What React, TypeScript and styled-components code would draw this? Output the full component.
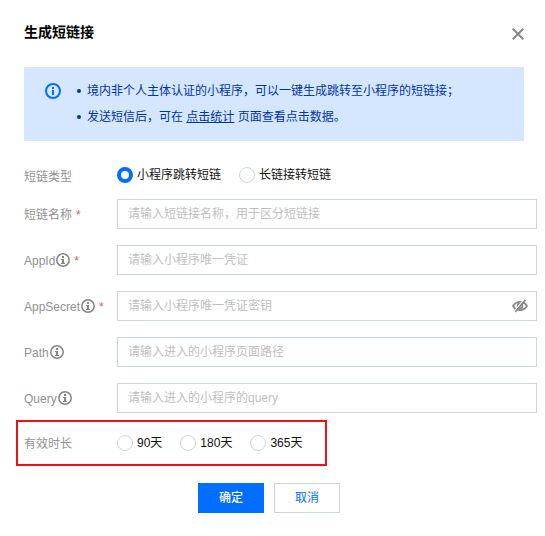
import React from 'react';
import styled, { createGlobalStyle, css } from 'styled-components';

const GlobalStyle = createGlobalStyle`
  *, *::before, *::after { box-sizing: border-box; }
  body {
    margin: 0;
    background: #fff;
    font: 12px/18px "Liberation Sans", "Noto Sans CJK SC", sans-serif;
  }
`;

const Dialog = styled.main`
  width: 545px;
  height: 536px;
  overflow: hidden;
  background: #fff;
`;

const Header = styled.header`
  display: flex;
  align-items: center;
  justify-content: space-between;
  height: 67px;
  padding: 0 21px 0 24px;
`;

const Title = styled.h1`
  margin: 0;
  padding-bottom: 4px;
  font-size: 14px;
  font-weight: 600;
  line-height: 22px;
  color: #000;
`;

const CloseButton = styled.button`
  display: flex;
  padding: 0;
  border: 0;
  background: none;
`;

const Notice = styled.section`
  display: flex;
  width: 500px;
  height: 74px;
  margin-left: 24px;
  padding: 11px 21px;
  background: #d5e7ff;
  color: #0034a8;
`;

const NoticeIcon = styled.span`
  display: flex;
  padding-top: 5px;
  color: #006eff;
`;

const NoticeList = styled.ul`
  margin: 0 0 0 16px;
  padding: 0;
  list-style: none;
`;

const NoticeItem = styled.li`
  display: flex;
  align-items: center;
  height: 26px;
  white-space: pre;

  &::before {
    content: '';
    width: 4px;
    height: 4px;
    margin-right: 6px;
    border-radius: 50%;
    background: currentColor;
  }
`;

const NoticeLink = styled.a`
  color: inherit;
  text-decoration: underline;
  text-underline-offset: 1px;
`;

const Form = styled.form`
  padding-top: 26px;
`;

const Row = styled.div`
  display: flex;
  margin: 0 0 16px 24px;
`;

const Label = styled.div<{ $compact?: boolean }>`
  display: flex;
  align-items: center;
  width: 93px;
  height: ${(p) => (p.$compact ? 16 : 30)}px;
  color: #929292;
`;

const LabelText = styled.span<{ $drop?: number }>`
  padding-top: ${(p) => p.$drop ?? 1}px;
`;

const Required = styled.span`
  margin-left: 4px;
  padding-top: 1px;
  color: #e85555;
`;

const Field = styled.div`
  display: flex;
  align-items: center;
  width: 420px;
  height: 30px;
  padding: 0 8px 0 10px;
  border: 1px solid #cfd5de;
`;

const Input = styled.input`
  flex: 1;
  min-width: 0;
  height: 28px;
  padding: 0 0 1px;
  border: 0;
  outline: 0;
  background: none;
  font: inherit;

  &::placeholder { color: #c0c0c0; opacity: 1; }
`;

const Options = styled.div`
  display: flex;
  align-items: center;
  gap: 18px;
  height: 16px;
`;

const Option = styled.label`
  display: flex;
  align-items: center;
  gap: 4px;
  color: #111;
  white-space: nowrap;
`;

const Radio = styled.span<{ $checked?: boolean }>`
  width: 16px;
  height: 16px;
  border: 1px solid #cfd5de;
  border-radius: 50%;
  ${(p) => p.$checked && css`border: 4px solid #006eff;`}
`;

const Highlight = styled.div`
  display: flex;
  width: 311px;
  height: 46px;
  margin: -9px 0 17px 16px;
  padding: 13px 0 0 6px;
  border: 2px solid #ed1118;
`;

const Actions = styled.footer`
  display: flex;
  gap: 10px;
  padding-left: 198px;
`;

const Button = styled.button<{ $primary?: boolean }>`
  width: 66px;
  height: 30px;
  padding: 0;
  border: 1px solid ${(p) => (p.$primary ? '#006eff' : '#cfd5de')};
  background: ${(p) => (p.$primary ? '#006eff' : '#fff')};
  color: ${(p) => (p.$primary ? '#fff' : '#006eff')};
  font: ${(p) => (p.$primary ? 500 : 400)} 12px/28px "Liberation Sans", "Noto Sans CJK SC", sans-serif;
`;

const HelpMark = styled.svg`
  flex: none;
  margin-left: 1px;
`;

const InfoIcon = () => (
  <svg width="16" height="16" viewBox="0 0 16 16" fill="none" stroke="currentColor" strokeWidth="2">
    <circle cx="8" cy="8" r="7" />
    <path d="M8 4v2M8 7v5" />
  </svg>
);

const HelpIcon = () => (
  <HelpMark width="14" height="14" viewBox="0 0 14 14" fill="none" stroke="#858585">
    <circle cx="7" cy="7" r="6.2" strokeWidth="1.5" />
    <path d="M7 3v2" strokeWidth="2" />
    <path d="M5 6.5h2M5 10.5h4" strokeWidth="1" />
    <path d="M7 6v5" strokeWidth="2" />
  </HelpMark>
);

const CloseIcon = () => (
  <svg width="12" height="12" viewBox="0 0 12 12" fill="none" stroke="#888" strokeWidth="2">
    <path d="M.7.7l10.6 10.6M11.3.7L.7 11.3" />
  </svg>
);

const HiddenIcon = () => (
  <svg width="16" height="14" viewBox="0 0 16 14" fill="none" stroke="#888">
    <path d="M1 7C4.5 1.4 11.5 1.4 15 7C11.5 12.6 4.5 12.6 1 7Z" strokeWidth="1.8" />
    <circle cx="8" cy="7" r="2.4" strokeWidth="1.6" />
    <path d="M12 .4L2.4 12.4" stroke="#fff" strokeWidth="1.3" />
    <path d="M13.3 1L3.2 13" strokeWidth="1.7" />
  </svg>
);

interface FieldSpec {
  label: string;
  placeholder: string;
  help?: boolean;
  required?: boolean;
  secret?: boolean;
}

const fields: FieldSpec[] = [
  { label: '短链名称', placeholder: '请输入短链接名称，用于区分短链接', required: true },
  { label: 'AppId', placeholder: '请输入小程序唯一凭证', help: true, required: true },
  { label: 'AppSecret', placeholder: '请输入小程序唯一凭证密钥', help: true, required: true, secret: true },
  { label: 'Path', placeholder: '请输入进入的小程序页面路径', help: true },
  { label: 'Query', placeholder: '请输入进入的小程序的query', help: true },
];

export default function App() {
  return (
    <Dialog>
      <GlobalStyle />
      <Header>
        <Title>生成短链接</Title>
        <CloseButton aria-label="关闭"><CloseIcon /></CloseButton>
      </Header>
      <Notice>
        <NoticeIcon><InfoIcon /></NoticeIcon>
        <NoticeList>
          <NoticeItem>境内非个人主体认证的小程序，可以一键生成跳转至小程序的短链接；</NoticeItem>
          <NoticeItem>发送短信后，可在 <NoticeLink>点击统计</NoticeLink> 页面查看点击数据。</NoticeItem>
        </NoticeList>
      </Notice>
      <Form onSubmit={(e) => e.preventDefault()}>
        <Row>
          <Label $compact><LabelText $drop={3}>短链类型</LabelText></Label>
          <Options>
            <Option><Radio $checked />小程序跳转短链</Option>
            <Option><Radio />长链接转短链</Option>
          </Options>
        </Row>
        {fields.map((f) => (
          <Row key={f.label}>
            <Label>
              <LabelText>{f.label}</LabelText>
              {f.help && <HelpIcon />}
              {f.required && <Required>*</Required>}
            </Label>
            <Field>
              <Input placeholder={f.placeholder} />
              {f.secret && <HiddenIcon />}
            </Field>
          </Row>
        ))}
        <Highlight>
          <Label $compact><LabelText $drop={2}>有效时长</LabelText></Label>
          <Options>
            {['90天', '180天', '365天'].map((d) => (
              <Option key={d}><Radio />{d}</Option>
            ))}
          </Options>
        </Highlight>
        <Actions>
          <Button $primary>确定</Button>
          <Button>取消</Button>
        </Actions>
      </Form>
    </Dialog>
  );
}
